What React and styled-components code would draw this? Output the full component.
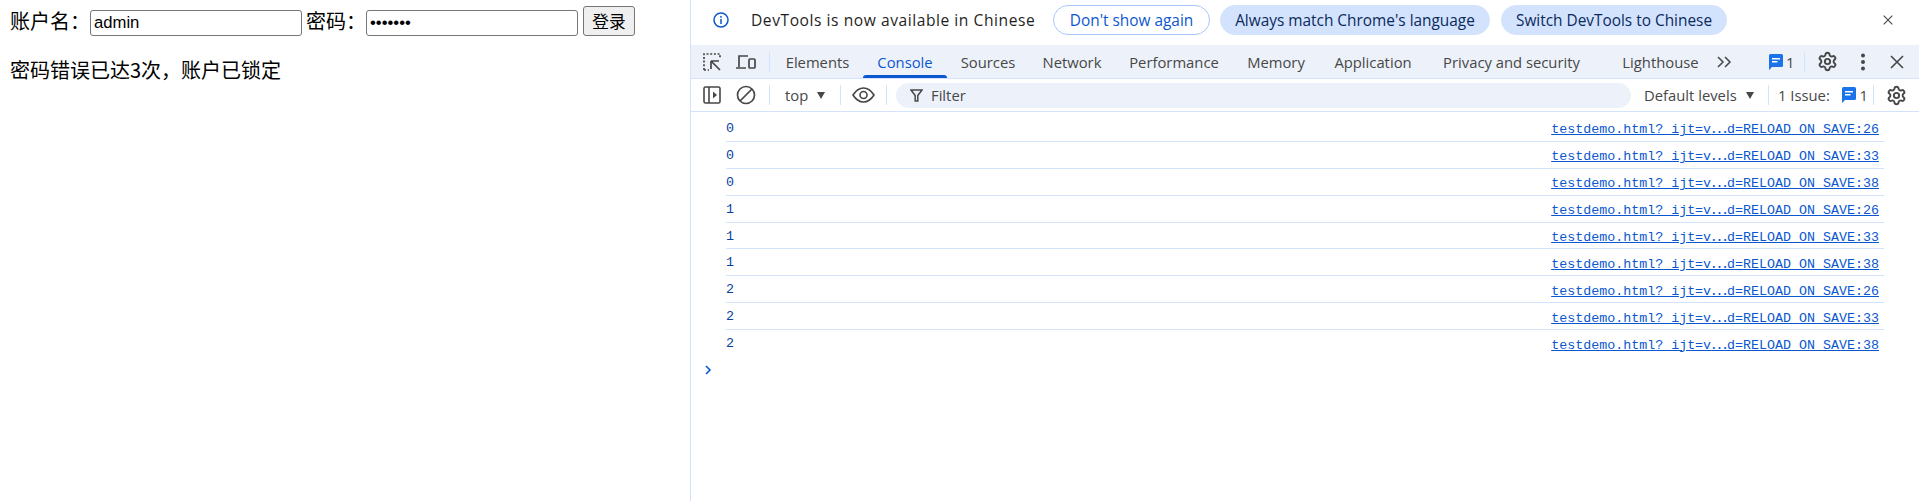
import React from "react";
import styled, { createGlobalStyle } from "styled-components";
import { Settings } from "lucide-react";

const GlobalStyle = createGlobalStyle`
  html, body { margin: 0; padding: 0; height: 100%; overflow: hidden; background: #fff; }
  #root { height: 100%; }
`;

const Page = styled.div`
  display: flex;
  width: 1919px;
  height: 501px;
`;

/* left: the page being tested */
const Demo = styled.div`
  width: 690px;
  flex: none;
  box-sizing: border-box;
  padding: 6px 0 0 10px;
  font-family: "Noto Sans CJK SC", sans-serif;
  font-size: 20px;
  color: #000;
`;
const LoginRow = styled.div`
  display: flex;
  align-items: flex-start;
  height: 31px;
`;
const FieldLabel = styled.span`
  width: ${(p) => p.$width}px;
  margin-left: ${(p) => p.$gap || 0}px;
  flex: none;
  line-height: 29px;
`;
const Field = styled.input`
  width: 212px;
  height: 26px;
  margin-top: 4px;
  box-sizing: border-box;
  flex: none;
  border: 1px solid #767676;
  border-radius: 3px;
  padding: 0 3px;
  font-family: "Liberation Sans", sans-serif;
  font-size: 16.67px;
  color: #000;
  background: #fff;
  outline: none;
`;
const LoginButton = styled.button`
  width: 52px;
  height: 30px;
  margin-left: 5px;
  flex: none;
  box-sizing: border-box;
  border: 1px solid #767676;
  border-radius: 3px;
  background: #efefef;
  padding: 0;
  font-family: "Noto Sans CJK SC", sans-serif;
  font-size: 16.67px;
  color: #000;
`;
const LockMessage = styled.p`
  margin: 18px 0 0;
  line-height: 29px;
`;

/* right: devtools */
const DevTools = styled.div`
  flex: 1;
  min-width: 0;
  border-left: 1px solid #d3e3fd;
  font-family: "Open Sans", sans-serif;
  font-size: 14.8px;
  color: #1f1f1f;
`;
const InfoBar = styled.div`
  display: flex;
  align-items: center;
  height: 45px;
  box-sizing: border-box;
  padding: 0 0 5px 22px;
`;
const InfoText = styled.span`
  margin-left: 22px;
  width: 302px;
  flex: none;
  white-space: nowrap;
  font-size: 15.6px;
  letter-spacing: 0.55px;
`;
const Pill = styled.button`
  width: ${(p) => p.$width}px;
  height: 30px;
  flex: none;
  margin-right: ${(p) => p.$gap}px;
  box-sizing: border-box;
  border-radius: 15px;
  padding: 0;
  font-family: inherit;
  font-size: 15.4px;
  white-space: nowrap;
  border: 1px solid ${(p) => (p.$outlined ? "#a8c7fa" : "#d3e3fd")};
  background: ${(p) => (p.$outlined ? "#fff" : "#d3e3fd")};
  color: ${(p) => (p.$outlined ? "#0b57d0" : "#0a2a5c")};
`;
const InfoClose = styled.span`
  display: flex;
  margin-left: auto;
  margin-right: 26px;
`;
const TabBar = styled.div`
  display: flex;
  align-items: center;
  height: 33px;
  background: #edf2fa;
  padding-left: 4px;
`;
const IconSlot = styled.span`
  display: flex;
  align-items: center;
  justify-content: center;
  flex: none;
  width: ${(p) => p.$width || 34}px;
  color: #474747;
`;
const Separator = styled.span`
  width: 1px;
  height: 20px;
  flex: none;
  margin-left: ${(p) => p.$before || 0}px;
  margin-right: ${(p) => p.$after || 0}px;
  background: #d3e3fd;
`;
const Tab = styled.div`
  position: relative;
  display: flex;
  align-items: center;
  justify-content: center;
  width: ${(p) => p.$width}px;
  height: 33px;
  margin-left: ${(p) => p.$gap || 0}px;
  flex: none;
  white-space: nowrap;
  color: ${(p) => (p.$active ? "#0b57d0" : "#474747")};
  ${(p) =>
    p.$active &&
    `&::after {
      content: "";
      position: absolute;
      left: 0;
      right: 0;
      bottom: 0;
      height: 3px;
      border-radius: 3px 3px 0 0;
      background: #0b57d0;
    }`}
`;
const Counter = styled.span`
  display: flex;
  align-items: center;
  gap: ${(p) => p.$spacing || 3}px;
  flex: none;
  width: ${(p) => p.$width}px;
  margin-left: ${(p) => p.$gap || 0}px;
  color: #474747;
`;
const ConsoleBar = styled.div`
  display: flex;
  align-items: center;
  height: 34px;
  box-sizing: border-box;
  border-top: 1px solid #d3e3fd;
  border-bottom: 1px solid #d3e3fd;
  padding-left: 4px;
  color: #474747;
`;
const ContextSelect = styled.span`
  display: flex;
  align-items: center;
  justify-content: space-between;
  width: 40px;
  flex: none;
  margin: 0 15px;
`;
const Caret = styled.span`
  width: 0;
  height: 0;
  border-left: 4.5px solid transparent;
  border-right: 4.5px solid transparent;
  border-top: 7px solid #474747;
`;
const FilterBox = styled.div`
  display: flex;
  align-items: center;
  gap: 8px;
  width: 735px;
  height: 25px;
  margin-left: 9px;
  padding-left: 14px;
  box-sizing: border-box;
  flex: none;
  border-radius: 13px;
  background: #edf2fa;
`;
const LevelSelect = styled.span`
  display: flex;
  align-items: center;
  justify-content: space-between;
  width: 110px;
  flex: none;
  margin: 0 14px 0 13px;
  white-space: nowrap;
`;
const Log = styled.div`
  padding: 3px 0 0 35px;
  width: 1158px;
`;
const LogRow = styled.div`
  display: flex;
  align-items: center;
  justify-content: space-between;
  height: 26.9px;
  box-sizing: border-box;
  padding: 1px 5px 0 0;
  border-bottom: 1px solid ${(p) => (p.$last ? "transparent" : "#d3e3fd")};
  font-family: "Liberation Mono", monospace;
  font-size: 13.33px;
  color: #0842a0;
`;
const SourceLink = styled.a`
  color: #0b57d0;
  text-decoration: underline;
  white-space: nowrap;
`;
const WideEllipsis = styled.span`
  font-family: "Noto Sans CJK SC", sans-serif;
  font-size: 15px;
  line-height: 1;
`;
const Prompt = styled.div`
  display: flex;
  padding: 8px 0 0 14px;
`;

const Inspect = () => (
  <svg width="20" height="20" viewBox="0 0 20 20" fill="none" stroke="currentColor" strokeWidth="1.7">
    <path d="M2 18V2H18V7M2 18H7" strokeDasharray="2 1.7" />
    <path d="M9 9h8M9 9v8M9.500 9.500l8.500 8.500" />
  </svg>
);
const Device = () => (
  <svg width="22" height="18" viewBox="0 0 22 18" fill="none" stroke="currentColor" strokeWidth="1.7">
    <path d="M4 14V3h9M1 15h10" />
    <rect x="14" y="6" width="6" height="9" rx="1" />
  </svg>
);
const Chevrons = () => (
  <svg width="16" height="14" viewBox="0 0 16 14" fill="none" stroke="#474747" strokeWidth="1.5">
    <path d="M2 2l5 5-5 5M9 2l5 5-5 5" />
  </svg>
);
const Message = () => (
  <svg width="14" height="16" viewBox="0 0 14 16">
    <path d="M1.500 0h11A1.500 1.500 0 0 1 14 1.500v10a1.500 1.500 0 0 1-1.500 1.500H3l-3 3V1.500A1.500 1.500 0 0 1 1.500 0z" fill="#1a73e8" />
    <path d="M3 4h8v1.500H3zM3 7h5.500v1.500H3z" fill="#fff" />
  </svg>
);
const Gear = () => <Settings size={21} color="#474747" strokeWidth={2.2} />;
const Cross = ({ size = 14 }) => (
  <svg width={size} height={size} viewBox="0 0 14 14" fill="none" stroke="#474747" strokeWidth="1.6">
    <path d="M1 1l12 12M13 1L1 13" />
  </svg>
);
const Dots = () => (
  <svg width="6" height="18" viewBox="0 0 6 18" fill="#474747">
    <circle cx="3" cy="2.500" r="2" />
    <circle cx="3" cy="9" r="2" />
    <circle cx="3" cy="15.500" r="2" />
  </svg>
);
const InfoIcon = () => (
  <svg width="16" height="16" viewBox="0 0 16 16" fill="none" stroke="#0b57d0" strokeWidth="1.5">
    <circle cx="8" cy="8" r="7" />
    <path d="M8 7v5M8 4v1.800" />
  </svg>
);
const SidebarIcon = () => (
  <svg width="18" height="18" viewBox="0 0 18 18" fill="none" stroke="#474747" strokeWidth="1.6">
    <rect x="1" y="1" width="16" height="16" rx="1.500" />
    <path d="M6 1v16" />
    <path d="M10 5.500l4 3.500-4 3.500z" fill="#474747" stroke="none" />
  </svg>
);
const ClearIcon = () => (
  <svg width="20" height="20" viewBox="0 0 20 20" fill="none" stroke="#474747" strokeWidth="1.7">
    <circle cx="10" cy="10" r="8.500" />
    <path d="M4 16L16 4" />
  </svg>
);
const EyeIcon = () => (
  <svg width="23" height="16" viewBox="0 0 23 16" fill="none" stroke="#474747" strokeWidth="1.6">
    <path d="M1 8c3-4.700 6.500-7 10.500-7S19 3.300 22 8c-3 4.700-6.500 7-10.500 7S4 12.700 1 8z" />
    <circle cx="11.500" cy="8" r="3.500" />
  </svg>
);
const FunnelIcon = () => (
  <svg width="13" height="13" viewBox="0 0 13 13" fill="none" stroke="#474747" strokeWidth="1.5">
    <path d="M1 1h11L7.800 6.500V12H5.200V6.500z" />
  </svg>
);
const PromptIcon = () => (
  <svg width="7" height="10" viewBox="0 0 7 10" fill="none" stroke="#0b57d0" strokeWidth="1.6">
    <path d="M1 1l4 4-4 4" />
  </svg>
);

const tabs = [
  { name: "Elements", width: 91 },
  { name: "Console", width: 84, active: true },
  { name: "Sources", width: 82 },
  { name: "Network", width: 86 },
  { name: "Performance", width: 118 },
  { name: "Memory", width: 86 },
  { name: "Application", width: 108 },
  { name: "Privacy and security", width: 169 },
  { name: "Lighthouse", width: 103, gap: 13 },
];

const logRows = [
  [0, 26], [0, 33], [0, 38],
  [1, 26], [1, 33], [1, 38],
  [2, 26], [2, 33], [2, 38],
];

const App = () => (
  <Page>
    <GlobalStyle />
    <Demo>
      <LoginRow>
        <FieldLabel $width={80}>账户名：</FieldLabel>
        <Field type="text" defaultValue="admin" />
        <FieldLabel $width={60} $gap={4}>密码：</FieldLabel>
        <Field type="password" defaultValue="1234567" />
        <LoginButton>登录</LoginButton>
      </LoginRow>
      <LockMessage>密码错误已达3次，账户已锁定</LockMessage>
    </Demo>
    <DevTools>
      <InfoBar>
        <InfoIcon />
        <InfoText>DevTools is now available in Chinese</InfoText>
        <Pill $outlined $width={157} $gap={10}>Don't show again</Pill>
        <Pill $width={270} $gap={11}>Always match Chrome's language</Pill>
        <Pill $width={226} $gap={0}>Switch DevTools to Chinese</Pill>
        <InfoClose><Cross size={10} /></InfoClose>
      </InfoBar>
      <TabBar>
        <IconSlot><Inspect /></IconSlot>
        <IconSlot><Device /></IconSlot>
        <Separator $before={6} $after={2} />
        {tabs.map((tab) => (
          <Tab key={tab.name} $width={tab.width} $gap={tab.gap} $active={tab.active}>{tab.name}</Tab>
        ))}
        <IconSlot $width={24}><Chevrons /></IconSlot>
        <IconSlot $width={33} />
        <Counter $width={35}><Message />1</Counter>
        <Separator />
        <IconSlot $width={45}><Gear /></IconSlot>
        <IconSlot $width={26}><Dots /></IconSlot>
        <IconSlot $width={42}><Cross /></IconSlot>
      </TabBar>
      <ConsoleBar>
        <IconSlot><SidebarIcon /></IconSlot>
        <IconSlot><ClearIcon /></IconSlot>
        <Separator $before={6} />
        <ContextSelect>top <Caret /></ContextSelect>
        <Separator />
        <IconSlot $width={45}><EyeIcon /></IconSlot>
        <Separator />
        <FilterBox><FunnelIcon />Filter</FilterBox>
        <LevelSelect>Default levels <Caret /></LevelSelect>
        <Separator />
        <Counter $width={95} $gap={9} $spacing={4}>1 Issue:&nbsp;&nbsp;<Message />1</Counter>
        <Separator />
        <IconSlot $width={45}><Gear /></IconSlot>
      </ConsoleBar>
      <Log>
        {logRows.map(([value, line], i) => (
          <LogRow key={i} $last={i === logRows.length - 1}>
            <span>{value}</span>
            <SourceLink>testdemo.html?_ijt=v<WideEllipsis>⋯</WideEllipsis>d=RELOAD_ON_SAVE:{line}</SourceLink>
          </LogRow>
        ))}
      </Log>
      <Prompt><PromptIcon /></Prompt>
    </DevTools>
  </Page>
);

export default App;
